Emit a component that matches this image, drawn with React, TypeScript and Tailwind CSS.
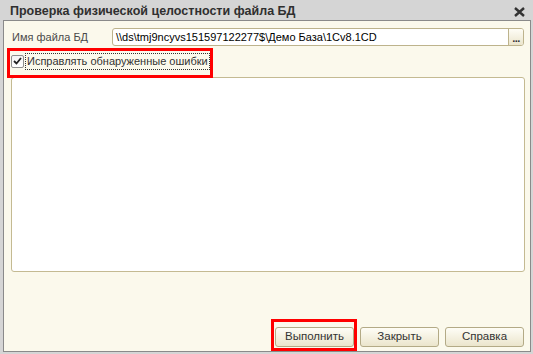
import React from 'react'

const FONT = { fontFamily: '"Liberation Sans", Arial, sans-serif' }

function Button({ label }: { label: string }) {
  return (
    <button
      className="w-[79px] h-[20px] rounded-[3px] border border-[#b3aa86] bg-gradient-to-b from-[#fefdf6] to-[#ebe5cc] text-[11.5px] text-[#333] leading-none flex items-center justify-center"
      style={FONT}
    >
      {label}
    </button>
  )
}

export default function App() {
  return (
    <div className="relative w-[533px] h-[354px] bg-[#d5d5d5] flex flex-col" style={FONT}>
      {/* Заголовок окна */}
      <div className="h-[20px] flex items-center justify-between pl-[10px] pr-[8px]">
        <span className="text-[12.5px] font-bold text-[#2f2f2f] leading-none mt-[2px]">
          Проверка физической целостности файла БД
        </span>
        <svg width="11" height="10" viewBox="0 0 11 10" className="mt-[3px]">
          <path d="M1 1 L10 9 M10 1 L1 9" stroke="#333" strokeWidth="2.4" />
        </svg>
      </div>

      {/* Тело формы */}
      <div className="flex-1 ml-[3px] mr-[2px] mb-[2px] border border-[#8a8a8a] bg-[#fbf9ec] flex flex-col pl-[7px] pr-[5px] pt-[7px] pb-[4px]">
        <div className="flex items-center h-[18px]">
          <span className="w-[101px] pl-[1px] text-[11px] text-[#4a4a4a] leading-none">Имя файла БД</span>
          <div className="flex-1 mr-[1px] h-[18px] flex rounded-[3px] border border-[#bdb38c] bg-white overflow-hidden">
            <span className="flex-1 pl-[3px] text-[11px] text-black leading-[16px] whitespace-nowrap">
              {'\\\\ds\\tmj9ncyvs151597122277$\\Демо База\\1Cv8.1CD'}
            </span>
            <div className="w-[15px] h-full border-l border-[#bdb38c] bg-gradient-to-b from-[#fefdf6] to-[#ebe5cc] flex items-end justify-center pb-[4px]">
              <span className="text-[11px] font-bold leading-[6px] text-[#333] tracking-[-0.5px]">...</span>
            </div>
          </div>
        </div>

        <div className="flex items-center h-[22px] mt-[4px]">
          <div className="w-[13px] h-[13px] border border-[#8e8e8e] rounded-[2px] bg-gradient-to-b from-[#f4f4f4] to-white flex items-center justify-center">
            <svg width="9" height="8" viewBox="0 0 9 8">
              <path d="M1 4 L3.5 6.5 L8 1" fill="none" stroke="#222" strokeWidth="1.8" />
            </svg>
          </div>
          <span className="ml-[1px] px-[1px] py-[1px] border border-dotted border-[#333] text-[11px] text-[#333] leading-[13px] whitespace-nowrap">
            Исправлять обнаруженные ошибки
          </span>
        </div>

        <div className="mt-[5px] h-[195px] rounded-[3px] border border-[#c4ba92] bg-white" />

        <div className="flex-1" />

        <div className="flex justify-end gap-[6px] mr-[1px]">
          <Button label="Выполнить" />
          <Button label="Закрыть" />
          <Button label="Справка" />
        </div>
      </div>

      {/* Красные рамки-выделения */}
      <div className="absolute left-[7px] top-[48px] w-[206px] h-[30px] border-[3px] border-[#ff0000]" />
      <div className="absolute left-[271px] top-[319px] w-[86px] h-[32px] border-[3px] border-[#ff0000]" />
    </div>
  )
}
